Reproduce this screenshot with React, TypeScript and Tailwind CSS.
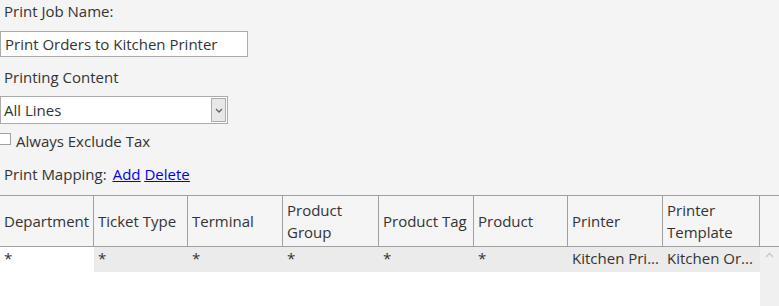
export default function App() {
  const cols = [
    { name: "Department", w: "w-[94px]" },
    { name: "Ticket Type", w: "w-[94px]" },
    { name: "Terminal", w: "w-[95px]" },
    { name: "Product Group", w: "w-[96px]" },
    { name: "Product Tag", w: "w-[95px]" },
    { name: "Product", w: "w-[94px]" },
    { name: "Printer", w: "w-[95px]" },
    { name: "Printer Template", w: "w-[97px]" },
  ];
  const row = ["*", "*", "*", "*", "*", "*", "Kitchen Pri...", "Kitchen Or..."];

  return (
    <main className="w-[779px] h-[306px] overflow-hidden bg-[#f4f4f4] text-[#333] text-[15px] font-['Open_Sans',sans-serif]">
      <div className="pl-[4px] pt-[1px] h-[31px] leading-[20px]">Print Job Name:</div>
      <input
        className="block w-[248px] h-[26px] border border-[#ababab] bg-white px-[4px] text-[15px] outline-none"
        defaultValue="Print Orders to Kitchen Printer"
      />
      <div className="pl-[4px] pt-[10px] h-[39px] leading-[20px]">Printing Content</div>
      <div className="flex items-center w-[228px] h-[28px] border border-[#ababab] bg-white">
        <span className="flex-1 pl-[3px]">All Lines</span>
        <span className="flex items-center justify-center w-[15px] h-[24px] mr-[1px] border border-[#acacac] bg-[#e8e8e8]">
          <svg width="8" height="5" viewBox="0 0 8 5">
            <path d="M1 1 L4 4 L7 1" stroke="#606060" strokeWidth="1.3" fill="none" />
          </svg>
        </span>
      </div>
      <label className="flex items-center gap-[5px] mt-[6px] h-[22px] ml-[-1px]">
        <span className="block w-[12px] h-[12px] border border-[#a0a0a0] bg-white mt-[-5px]" />
        <span>Always Exclude Tax</span>
      </label>
      <div className="flex items-start gap-[6px] pl-[4px] pt-[12px] h-[43px] leading-[20px]">
        <span>Print Mapping:</span>
        <span className="flex gap-[4px] text-[#0000ee] underline">
          <a>Add</a>
          <a>Delete</a>
        </span>
      </div>
      <div className="border-t border-[#a0a0a0]">
        <div className="flex h-[51px] border-b border-[#a0a0a0] bg-[#f5f5f5]">
          {cols.map((c) => (
            <div
              key={c.name}
              className={`${c.w} flex items-center pl-[4px] pr-[2px] leading-[22px] border-r border-[#a0a0a0]`}
            >
              {c.name}
            </div>
          ))}
          <div className="flex-1" />
        </div>
        <div className="flex">
          <div className="flex flex-col bg-white">
            <div className="flex">
              {row.map((v, i) => (
                <div
                  key={i}
                  className={`${cols[i].w} h-[25px] pl-[4px] pr-[2px] leading-[22px] whitespace-nowrap ${i === 0 ? "bg-white" : "bg-[#ebebeb]"}`}
                >
                  {v}
                </div>
              ))}
            </div>
            <div className="h-[40px]" />
          </div>
          <div className="flex-1 h-[65px] flex justify-center pt-[5px] bg-[#f0f0f0]">
            <svg width="9" height="6" viewBox="0 0 9 6">
              <path d="M1 5 L4.5 1.5 L8 5" stroke="#c8c8c8" strokeWidth="1.4" fill="none" />
            </svg>
          </div>
        </div>
      </div>
    </main>
  );
}
